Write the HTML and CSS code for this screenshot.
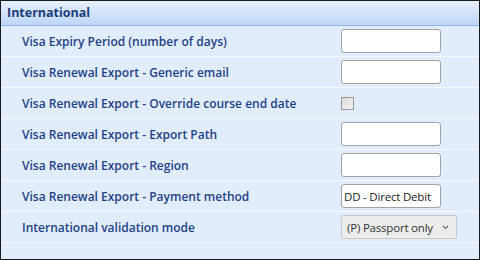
FILE: index.html
```html
<!DOCTYPE html>
<html lang="en">
<head>
    <meta charset="UTF-8">
    <title>International</title>
    <link rel="stylesheet" href="styles.css">
</head>
<body>
    <div class="panel">
        <div class="panel-header">International</div>
        <div class="setting-row">
            <label class="setting-label">Visa Expiry Period (number of days)</label>
            <input type="text" class="text-input">
        </div>
        <div class="setting-row">
            <label class="setting-label">Visa Renewal Export - Generic email</label>
            <input type="text" class="text-input">
        </div>
        <div class="setting-row">
            <label class="setting-label">Visa Renewal Export - Override course end date</label>
            <span class="check-box"></span>
        </div>
        <div class="setting-row">
            <label class="setting-label">Visa Renewal Export - Export Path</label>
            <input type="text" class="text-input">
        </div>
        <div class="setting-row">
            <label class="setting-label">Visa Renewal Export - Region</label>
            <input type="text" class="text-input">
        </div>
        <div class="setting-row">
            <label class="setting-label">Visa Renewal Export - Payment method</label>
            <input type="text" class="text-input" value="DD - Direct Debit">
        </div>
        <div class="setting-row">
            <label class="setting-label">International validation mode</label>
            <div class="select-box">
                <span class="select-text">(P) Passport only</span>
                <svg class="chevron" width="7" height="5" viewBox="0 0 7 5"><path d="M1 1 L3.5 3.5 L6 1" fill="none" stroke="#666" stroke-width="1.1"/></svg>
            </div>
        </div>
        <div class="setting-row last"></div>
    </div>
</body>
</html>
```

FILE: styles.css
```css
body {
    margin: 0;
    font-family: "Open Sans", "Noto Sans", sans-serif;
}
.panel {
    width: 478px;
    height: 258px;
    border: 1px solid #1a1a1a;
    background-color: #e1edfc;
    overflow: hidden;
}
.panel-header {
    height: 24px;
    line-height: 24px;
    padding-left: 6px;
    font-size: 12.5px;
    font-weight: 700;
    color: #1c3d78;
    background: linear-gradient(#e8f1fd, #bcd6f9);
    border-bottom: 1px solid #92b6ea;
}
.setting-row {
    display: grid;
    grid-template-columns: 319px auto;
    align-items: center;
    height: 30px;
    padding-left: 21px;
    border-bottom: 1px solid #f5f9ff;
}
.setting-label {
    font-size: 12px;
    font-weight: 600;
    color: #1e4386;
    white-space: nowrap;
}
.text-input {
    box-sizing: border-box;
    width: 100px;
    height: 24px;
    margin: 0;
    padding: 0 2px;
    border: 1px solid #a3a3a3;
    border-radius: 3px;
    background: #fff;
    font-family: "Open Sans", "Noto Sans", sans-serif;
    font-size: 11.5px;
    letter-spacing: -0.2px;
    color: #222;
}
.check-box {
    width: 11px;
    height: 11px;
    border: 1px solid #9a9a9a;
    background: linear-gradient(135deg, #d8d8d8, #f4f4f4);
}
.select-box {
    box-sizing: border-box;
    width: 116px;
    height: 24px;
    display: flex;
    align-items: center;
    justify-content: space-between;
    padding: 0 7px 0 5px;
    border: 1px solid #c9c9c9;
    border-radius: 2px;
    background: #ececec;
    font-size: 11.5px;
    letter-spacing: -0.2px;
    color: #333;
}
.select-text {
    white-space: nowrap;
}
.last {
    border-bottom: none;
}
```
